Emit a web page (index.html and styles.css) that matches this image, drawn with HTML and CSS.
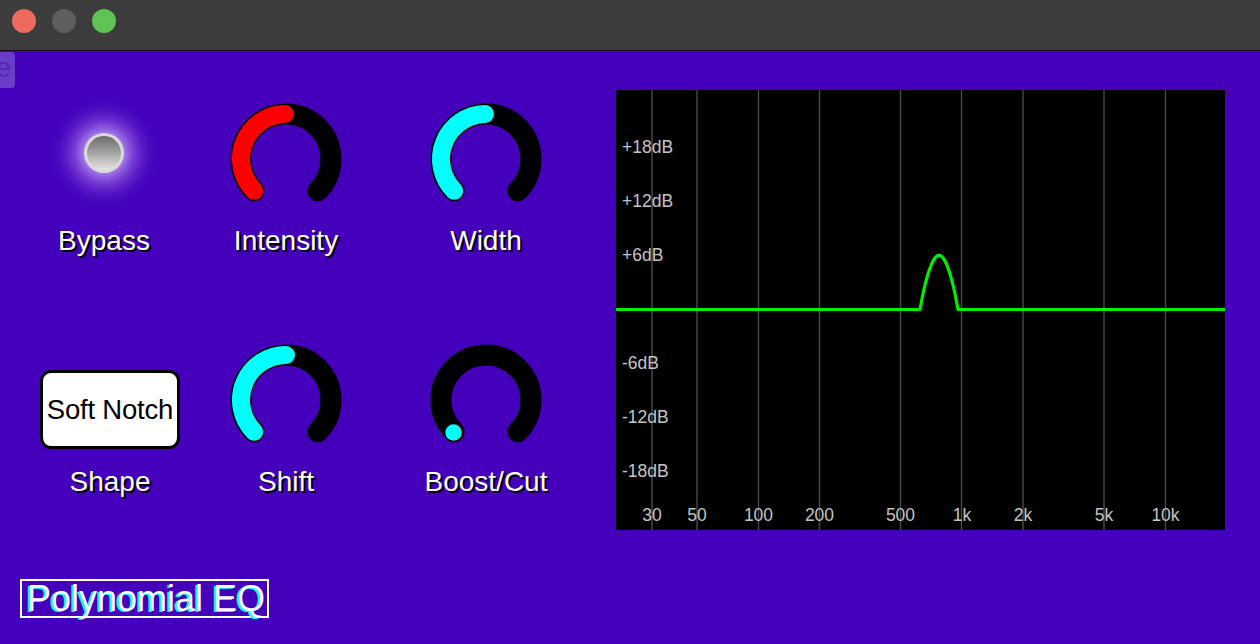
FILE: index.html
```html
<!DOCTYPE html>
<html>
<head>
<meta charset="utf-8">
<link rel="stylesheet" href="styles.css">
</head>
<body>
<div class="window">
  <div class="titlebar">
    <span class="light red"></span>
    <span class="light gray"></span>
    <span class="light green"></span>
  </div>
  <div class="content">
    <div class="tab"><span>e</span></div>
    <div class="left">
      <div class="grid">
        <div class="cell">
          <svg class="knob" viewBox="0 0 120 120" width="120" height="120">
            <defs>
              <radialGradient id="glow" cx="54" cy="54" r="58" gradientUnits="userSpaceOnUse">
                <stop offset="0" stop-color="#f6f0ff" stop-opacity="1"/>
                <stop offset="0.3" stop-color="#cdb2f8" stop-opacity="0.8"/>
                <stop offset="0.55" stop-color="#9a68e6" stop-opacity="0.5"/>
                <stop offset="0.8" stop-color="#6a2ed2" stop-opacity="0.2"/>
                <stop offset="1" stop-color="#4400bb" stop-opacity="0"/>
              </radialGradient>
              <linearGradient id="ledfill" x1="0" y1="0" x2="0" y2="1">
                <stop offset="0" stop-color="#6c6c6c"/>
                <stop offset="0.5" stop-color="#a4a4a4"/>
                <stop offset="1" stop-color="#e4e4e4"/>
              </linearGradient>
            </defs>
            <circle cx="54" cy="54" r="58" fill="url(#glow)"/>
            <circle cx="54" cy="54" r="20" fill="#dadada"/>
            <circle cx="54" cy="54" r="17" fill="url(#ledfill)"/>
          </svg>
          <div class="label label-bypass">Bypass</div>
        </div>
        <div class="cell">
          <svg class="knob" viewBox="0 0 120 120" width="120" height="120">
            <path d="M28.18 91.82 A45 45 0 1 1 91.82 91.82" class="track"/>
            <path d="M28.18 91.82 A45 45 0 0 1 59 15.01" class="fill-red"/>
          </svg>
          <div class="label">Intensity</div>
        </div>
        <div class="cell">
          <svg class="knob" viewBox="0 0 120 120" width="120" height="120">
            <path d="M28.18 91.82 A45 45 0 1 1 91.82 91.82" class="track"/>
            <path d="M28.18 91.82 A45 45 0 0 1 59 15.01" class="fill-cyan"/>
          </svg>
          <div class="label">Width</div>
        </div>
        <div class="cell">
          <div class="shape-box">
            <div class="button">Soft Notch</div>
          </div>
          <div class="label">Shape</div>
        </div>
        <div class="cell">
          <svg class="knob" viewBox="0 0 120 120" width="120" height="120">
            <path d="M28.18 91.82 A45 45 0 1 1 91.82 91.82" class="track"/>
            <path d="M28.18 91.82 A45 45 0 0 1 60 15" class="fill-cyan"/>
          </svg>
          <div class="label">Shift</div>
        </div>
        <div class="cell">
          <svg class="knob" viewBox="0 0 120 120" width="120" height="120">
            <path d="M28.18 91.82 A45 45 0 1 1 91.82 91.82" class="track"/>
            <circle cx="27.5" cy="92.5" r="9" class="dot"/>
          </svg>
          <div class="label">Boost/Cut</div>
        </div>
      </div>
      <div class="title">Polynomial EQ</div>
    </div>
    <svg class="graph" viewBox="0 0 609 440" width="609" height="440">
      <rect x="0" y="0" width="609" height="440" fill="#000"/>
      <g class="grid-lines">
        <line x1="36" y1="0" x2="36" y2="440"/>
        <line x1="81" y1="0" x2="81" y2="440"/>
        <line x1="142.5" y1="0" x2="142.5" y2="440"/>
        <line x1="203.5" y1="0" x2="203.5" y2="440"/>
        <line x1="284.5" y1="0" x2="284.5" y2="440"/>
        <line x1="345.5" y1="0" x2="345.5" y2="440"/>
        <line x1="407" y1="0" x2="407" y2="440"/>
        <line x1="488" y1="0" x2="488" y2="440"/>
        <line x1="549.5" y1="0" x2="549.5" y2="440"/>
      </g>
      <g class="axis-text">
        <text x="6" y="63">+18dB</text>
        <text x="6" y="117">+12dB</text>
        <text x="6" y="171">+6dB</text>
        <text x="6" y="279">-6dB</text>
        <text x="6" y="333">-12dB</text>
        <text x="6" y="387">-18dB</text>
      </g>
      <g class="axis-text freq">
        <text x="36" y="431">30</text>
        <text x="81" y="431">50</text>
        <text x="142.5" y="431">100</text>
        <text x="203.5" y="431">200</text>
        <text x="284.5" y="431">500</text>
        <text x="346" y="431">1k</text>
        <text x="407" y="431">2k</text>
        <text x="488" y="431">5k</text>
        <text x="549.5" y="431">10k</text>
      </g>
      <polyline class="curve" points="0,219.5 304,219.5 306,208.8 307.8,200 309.7,192 311.6,185.2 313.5,179.5 315.4,174.5 317.3,170.5 319.2,167.6 321.1,165.9 323,165.4 324.9,165.9 326.8,167.6 328.7,170.5 330.6,174.5 332.5,179.5 334.4,185.2 336.3,192 338.2,200 340,208.8 342,219.5 609,219.5"/>
    </svg>
  </div>
</div>
</body>
</html>
```
FILE: styles.css
```css
* {
  box-sizing: border-box;
}

html, body {
  margin: 0;
  padding: 0;
}

body {
  width: 1260px;
  height: 644px;
  overflow: hidden;
  font-family: "Liberation Sans", Arial, sans-serif;
}

.window {
  display: flex;
  flex-direction: column;
  height: 644px;
}

.titlebar {
  height: 51px;
  flex: none;
  background: #3c3c3c;
  border-bottom: 1px solid #111;
  display: flex;
  align-items: flex-start;
  gap: 16px;
  padding: 9px 0 0 12px;
}

.light {
  width: 24px;
  height: 24px;
  border-radius: 50%;
  display: block;
}

.light.red { background: #ed6a5e; }
.light.gray { background: #5e5e5e; }
.light.green { background: #5fc454; }

.content {
  flex: 1;
  background: #4400bb;
  position: relative;
  display: flex;
  align-items: flex-start;
}

.tab {
  position: absolute;
  left: 0;
  top: 1px;
  width: 15px;
  height: 36px;
  background: #6a3cc8;
  border-radius: 0 4px 4px 0;
  overflow: hidden;
  display: flex;
  align-items: center;
  justify-content: flex-end;
  padding-right: 4px;
}

.tab span {
  color: #5128b0;
  font-size: 28px;
  line-height: 28px;
  margin-top: -4px;
  flex: none;
}

.left {
  width: 616px;
  flex: none;
  padding: 48px 0 0 20px;
  display: flex;
  flex-direction: column;
  align-items: flex-start;
}

.grid {
  display: grid;
  grid-template-columns: 180px 172px 228px;
  row-gap: 84px;
}

.cell {
  display: flex;
  flex-direction: column;
  align-items: center;
  gap: 7px;
}

.knob {
  display: block;
  width: 120px;
  height: 120px;
}

.track {
  fill: none;
  stroke: #000;
  stroke-width: 21;
  stroke-linecap: round;
}

.fill-red,
.fill-cyan {
  fill: none;
  stroke-width: 18;
  stroke-linecap: round;
}

.fill-red { stroke: #ff0000; }
.fill-cyan { stroke: #00ffff; }

.dot {
  fill: #00ffff;
  stroke: #000;
  stroke-width: 1.5;
}

.label {
  color: #fff;
  font-size: 28px;
  line-height: 30px;
  height: 30px;
  text-shadow: 2px 2px 0 #000;
  white-space: nowrap;
}

.label-bypass {
  padding-right: 12px;
}

.shape-box {
  height: 120px;
  width: 180px;
  display: flex;
  justify-content: center;
  align-items: flex-start;
  padding-top: 30px;
}

.button {
  width: 140px;
  height: 79px;
  background: #fff;
  border: 3px solid #000;
  border-radius: 11px;
  display: flex;
  align-items: center;
  justify-content: center;
  color: #000;
  font-size: 27.5px;
  white-space: nowrap;
  letter-spacing: -0.2px;
}

.title {
  margin-top: 82px;
  border: 2px solid #fff;
  color: #fff;
  font-size: 36px;
  line-height: 35px;
  padding: 0 2px 0 5px;
  text-shadow: -2px 1px 0 #00ffff;
  white-space: nowrap;
}

.graph {
  display: block;
  flex: none;
  margin-top: 39px;
  width: 609px;
  height: 440px;
}

.grid-lines line {
  stroke: #464646;
  stroke-width: 1.5;
}

.axis-text text {
  fill: #c4c4c4;
  font-family: "Liberation Sans", Arial, sans-serif;
  font-size: 17.5px;
}

.freq text {
  text-anchor: middle;
}

.curve {
  fill: none;
  stroke: #00ee00;
  stroke-width: 3.2;
  stroke-linejoin: round;
}
```
